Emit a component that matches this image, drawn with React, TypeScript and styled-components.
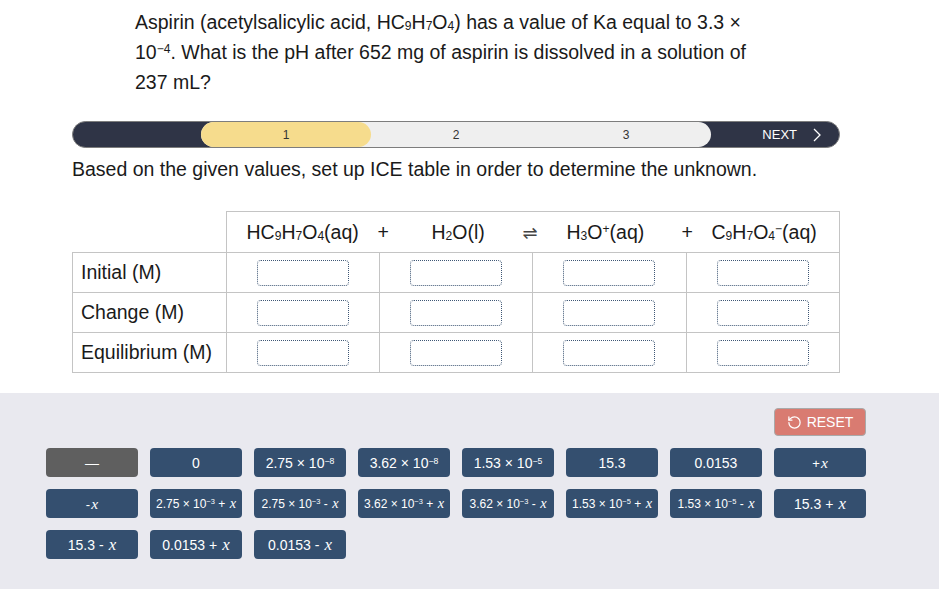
import React from "react";
import styled, { createGlobalStyle } from "styled-components";
import { RotateCcw } from "lucide-react";

const GlobalStyle = createGlobalStyle`
  body {
    margin: 0;
    background: #ffffff;
    font-family: "Liberation Sans", Arial, sans-serif;
    color: #1a1a1a;
  }
`;

const Sub = styled.sub`
  font-size: 0.62em;
  vertical-align: -0.12em;
  line-height: 0;
`;

const Sup = styled.sup`
  font-size: 0.62em;
  vertical-align: 0.5em;
  line-height: 0;
`;

const MathX = styled.span`
  font-family: "Liberation Serif", "Times New Roman", serif;
  font-style: italic;
  font-size: 1.2em;
  padding-left: 0.08em;
`;

const Page = styled.div`
  display: flex;
  flex-direction: column;
  min-height: 100vh;
`;

const Question = styled.p`
  margin: 7px 0 0 135px;
  width: 620px;
  font-size: 19.5px;
  line-height: 30px;
`;

const Main = styled.div`
  padding: 0 0 0 72px;
  width: 768px;
`;

const Track = styled.div`
  margin-top: 24px;
  height: 25px;
  display: flex;
  align-items: stretch;
  background: #2f3446;
  border: 1px solid #7d7d7d;
  border-radius: 14px;
  overflow: hidden;
`;

const TrackSide = styled.div`
  width: 128px;
  flex: none;
  display: flex;
  align-items: center;
  justify-content: flex-end;
  gap: 16px;
  padding-right: 18px;
  box-sizing: border-box;
  color: #ffffff;
  font-size: 13px;
`;

const Steps = styled.div`
  flex: 1;
  display: flex;
  background: #efefef;
  border-radius: 13px;
`;

const Step = styled.div<{ $active?: boolean }>`
  flex: 1;
  display: flex;
  align-items: center;
  justify-content: center;
  font-size: 12px;
  color: #333;
  background: ${({ $active }) => ($active ? "#f6dc8d" : "transparent")};
  border-radius: ${({ $active }) => ($active ? "13px" : "0")};
`;

const Instruction = styled.div`
  margin-top: 10px;
  font-size: 19.5px;
  line-height: 22px;
`;

const IceTable = styled.table`
  margin-top: 31px;
  width: 768px;
  border-collapse: collapse;
  table-layout: fixed;
  font-size: 19.5px;
`;

const Corner = styled.td`
  width: 153px;
  padding: 0;
`;

const HeaderCell = styled.td`
  height: 40px;
  padding: 0 0 0 20px;
  border: 1px solid #c4c4c4;
`;

const Equation = styled.div`
  display: flex;
  align-items: center;
  white-space: nowrap;
`;

const Token = styled.span<{ $w?: number }>`
  flex: none;
  width: ${({ $w }) => ($w ? `${$w}px` : "auto")};
`;

const Arrow = styled(Token)`
  font-family: "DejaVu Sans", sans-serif;
  font-size: 18px;
  color: #444;
`;

const LabelCell = styled.td`
  height: 39px;
  padding: 0 0 0 8px;
  border: 1px solid #c4c4c4;
`;

const InputCell = styled.td`
  height: 39px;
  padding: 0;
  border: 1px solid #c4c4c4;
  text-align: center;
`;

const Slot = styled.div`
  display: inline-block;
  width: 92px;
  height: 26px;
  box-sizing: border-box;
  border: 1px dotted #3f5775;
  border-radius: 4px;
  vertical-align: middle;
`;

const Tray = styled.div`
  margin-top: 20px;
  flex: 1;
  background: #e9e9ef;
  padding: 15px 73px 30px 46px;
  display: flex;
  flex-direction: column;
  align-items: flex-end;
  gap: 12px;
`;

const ResetButton = styled.button`
  width: 92px;
  height: 28px;
  display: flex;
  align-items: center;
  justify-content: center;
  gap: 5px;
  background: #d97b71;
  color: #ffffff;
  border: 1px solid #a9a9a9;
  border-radius: 4px;
  font-family: "Liberation Sans", Arial, sans-serif;
  font-size: 14px;
  padding: 0;
`;

const Grid = styled.div`
  display: grid;
  grid-template-columns: repeat(8, 92px);
  grid-auto-rows: 29px;
  column-gap: 12px;
  row-gap: 12px;
`;

const Chip = styled.button<{ $size: number; $muted?: boolean }>`
  display: flex;
  align-items: center;
  justify-content: center;
  padding: 0;
  border: none;
  border-radius: 4px;
  color: #ffffff;
  background: ${({ $muted }) => ($muted ? "#5f5f5f" : "#344f6f")};
  font-family: "Liberation Sans", Arial, sans-serif;
  font-size: ${({ $size }) => $size}px;
`;

const ChipText = styled.span`
  white-space: pre;
`;

const Chevron = () => (
  <svg width="8" height="14" viewBox="0 0 8 14">
    <polyline points="1,1 7,7 1,13" fill="none" stroke="#ffffff" strokeWidth="1.3" />
  </svg>
);

const ten = (exp: string) => (
  <>
    10<Sup>−{exp}</Sup>
  </>
);

type ChipData = { key: string; size: number; muted?: boolean; body: React.ReactNode };

const chips: ChipData[] = [
  { key: "dash", size: 14, muted: true, body: "—" },
  { key: "0", size: 14, body: "0" },
  { key: "a", size: 14, body: <>2.75 × {ten("8")}</> },
  { key: "b", size: 14, body: <>3.62 × {ten("8")}</> },
  { key: "c", size: 14, body: <>1.53 × {ten("5")}</> },
  { key: "d", size: 14, body: "15.3" },
  { key: "e", size: 14, body: "0.0153" },
  { key: "f", size: 13, body: <>+<MathX>x</MathX></> },
  { key: "g", size: 13, body: <>-<MathX>x</MathX></> },
  { key: "h", size: 12, body: <>2.75 × {ten("3")}{" + "}<MathX>x</MathX></> },
  { key: "i", size: 12, body: <>2.75 × {ten("3")}{" - "}<MathX>x</MathX></> },
  { key: "j", size: 12, body: <>3.62 × {ten("3")}{" + "}<MathX>x</MathX></> },
  { key: "k", size: 12, body: <>3.62 × {ten("3")}{" - "}<MathX>x</MathX></> },
  { key: "l", size: 12, body: <>1.53 × {ten("5")}{" + "}<MathX>x</MathX></> },
  { key: "m", size: 12, body: <>1.53 × {ten("5")}{" - "}<MathX>x</MathX></> },
  { key: "n", size: 14, body: <>{"15.3 + "}<MathX>x</MathX></> },
  { key: "o", size: 14, body: <>{"15.3 - "}<MathX>x</MathX></> },
  { key: "p", size: 14, body: <>{"0.0153 + "}<MathX>x</MathX></> },
  { key: "q", size: 14, body: <>{"0.0153 - "}<MathX>x</MathX></> },
];

const rows = ["Initial (M)", "Change (M)", "Equilibrium (M)"];

export default function App() {
  return (
    <Page>
      <GlobalStyle />
      <Question>
        Aspirin (acetylsalicylic acid, HC<Sub>9</Sub>H<Sub>7</Sub>O<Sub>4</Sub>) has a value of Ka
        equal to 3.3 × 10<Sup>−4</Sup>. What is the pH after 652 mg of aspirin is dissolved in a
        solution of 237 mL?
      </Question>
      <Main>
        <Track>
          <TrackSide />
          <Steps>
            <Step $active>1</Step>
            <Step>2</Step>
            <Step>3</Step>
          </Steps>
          <TrackSide>
            NEXT
            <Chevron />
          </TrackSide>
        </Track>
        <Instruction>Based on the given values, set up ICE table in order to determine the unknown.</Instruction>
        <IceTable>
          <tbody>
            <tr>
              <Corner />
              <HeaderCell colSpan={4}>
                <Equation>
                  <Token $w={131}>
                    HC<Sub>9</Sub>H<Sub>7</Sub>O<Sub>4</Sub>(aq)
                  </Token>
                  <Token $w={54}>+</Token>
                  <Token $w={91}>
                    H<Sub>2</Sub>O(l)
                  </Token>
                  <Arrow $w={44}>⇌</Arrow>
                  <Token $w={115}>
                    H<Sub>3</Sub>O<Sup>+</Sup>(aq)
                  </Token>
                  <Token $w={30}>+</Token>
                  <Token>
                    C<Sub>9</Sub>H<Sub>7</Sub>O<Sub>4</Sub>
                    <Sup>−</Sup>(aq)
                  </Token>
                </Equation>
              </HeaderCell>
            </tr>
            {rows.map((label) => (
              <tr key={label}>
                <LabelCell>{label}</LabelCell>
                {[0, 1, 2, 3].map((i) => (
                  <InputCell key={i}>
                    <Slot />
                  </InputCell>
                ))}
              </tr>
            ))}
          </tbody>
        </IceTable>
      </Main>
      <Tray>
        <ResetButton>
          <RotateCcw size={15} strokeWidth={2} />
          RESET
        </ResetButton>
        <Grid>
          {chips.map((c) => (
            <Chip key={c.key} $size={c.size} $muted={c.muted}>
              <ChipText>{c.body}</ChipText>
            </Chip>
          ))}
        </Grid>
      </Tray>
    </Page>
  );
}
